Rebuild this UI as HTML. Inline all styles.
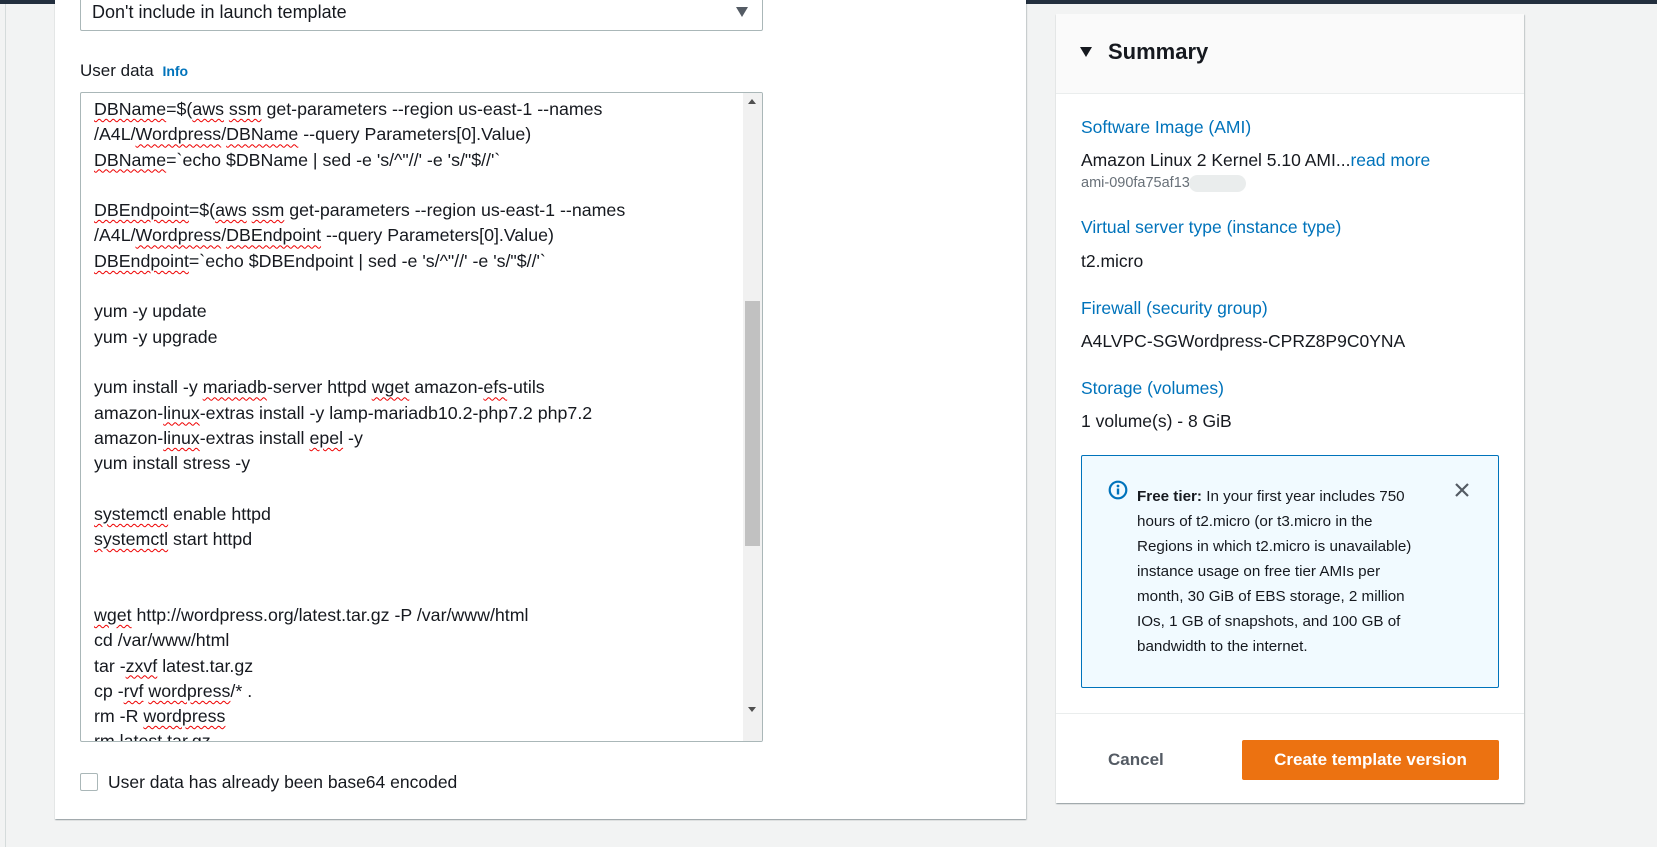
<!DOCTYPE html>
<html><head><meta charset="utf-8"><style>
*{box-sizing:border-box;margin:0;padding:0}
body{width:1657px;height:847px;background:#f2f3f3;font-family:"Liberation Sans",sans-serif;color:#16191f;position:relative;overflow:hidden}
.abs{position:absolute}
.topbar{left:0;top:0;width:1657px;height:4px;background:#232f3e}
.leftstrip{left:0;top:4px;width:6px;height:843px;background:#f2f3f3;border-right:1px solid #d5dbdb}
.card{left:55px;top:0;width:971px;height:819px;background:#fff;box-shadow:0 1px 1px rgba(0,28,36,.3),1px 1px 1px rgba(0,28,36,.15)}
.sel{left:80px;top:-2px;width:683px;height:33px;border:1px solid #aab7b8;border-radius:2px;background:#fff}
.cond{white-space:nowrap}
.ta{left:80px;top:92px;width:683px;height:650px;border:1px solid #aab7b8;border-radius:2px;overflow:hidden;background:#fff}
.lines{position:absolute;left:13px;top:4px;font-size:17.8px;line-height:25.3px;white-space:pre}
.w{text-decoration:underline wavy #e00;text-decoration-thickness:1px;text-underline-offset:3px}
.sb{position:absolute;right:0;top:0;width:19px;height:648px;background:#f1f1f1}
.thumb{position:absolute;left:2px;top:208px;width:15px;height:245px;background:#c1c1c1}
.side{left:1056px;top:14px;width:468px;height:789px;background:#fff;box-shadow:0 1px 1px rgba(0,28,36,.3),1px 1px 1px rgba(0,28,36,.15)}
.head{left:0;top:0;width:468px;height:80px;background:#fafafa;border-bottom:1px solid #eaeded}
.lbl{color:#0073bb;font-size:17.5px}
.val{font-size:17.5px;color:#16191f}
.info{left:25px;top:441px;width:418px;height:233px;background:#f1faff;border:1px solid #0073bb;border-radius:2px}
.ft{position:absolute;left:55px;top:28px;width:286px;font-size:15.2px;line-height:25px;color:#16191f}
.btn{left:186px;top:726px;width:257px;height:40px;background:#ec7211;border-radius:2px;color:#fff;font-weight:bold;font-size:17px;text-align:center;line-height:40px}
</style></head><body>
<div class="abs topbar"></div>
<div class="abs leftstrip"></div>
<div class="abs card"></div>
<div class="abs sel"><div class="abs cond" style="left:11px;top:3px;font-size:18px">Don't include in launch template</div>
<div class="abs" style="right:14px;top:8px;width:0;height:0;border-left:6px solid transparent;border-right:6px solid transparent;border-top:10px solid #545b64"></div></div>
<div class="abs cond" style="left:80px;top:61px;font-size:17px">User data <b style="color:#0073bb;font-size:14px;margin-left:4px">Info</b></div>
<div class="abs ta">
<div class="lines"><span class="w">DBName</span>=$(<span class="w">aws</span> <span class="w">ssm</span> get-parameters --region us-east-1 --names
/A4L/<span class="w">Wordpress</span>/<span class="w">DBName</span> --query Parameters[0].Value)
<span class="w">DBName</span>=`echo $DBName | sed -e 's/^"//' -e 's/"$//'`

<span class="w">DBEndpoint</span>=$(<span class="w">aws</span> <span class="w">ssm</span> get-parameters --region us-east-1 --names
/A4L/<span class="w">Wordpress</span>/<span class="w">DBEndpoint</span> --query Parameters[0].Value)
<span class="w">DBEndpoint</span>=`echo $DBEndpoint | sed -e 's/^"//' -e 's/"$//'`

yum -y update
yum -y upgrade

yum install -y <span class="w">mariadb</span>-server httpd <span class="w">wget</span> amazon-<span class="w">efs</span>-utils
amazon-<span class="w">linux</span>-extras install -y lamp-mariadb10.2-php7.2 php7.2
amazon-<span class="w">linux</span>-extras install <span class="w">epel</span> -y
yum install stress -y

<span class="w">systemctl</span> enable httpd
<span class="w">systemctl</span> start httpd


<span class="w">wget</span> http://wordpress.org/latest.tar.gz -P /var/www/html
cd /var/www/html
tar -<span class="w">zxvf</span> latest.tar.gz
cp -<span class="w">rvf</span> <span class="w">wordpress</span>/* .
rm -R <span class="w">wordpress</span>
rm latest.tar.gz</div>
<div class="sb"><div class="abs" style="left:5px;top:6px;border-left:4px solid transparent;border-right:4px solid transparent;border-bottom:5px solid #505050"></div><div class="thumb"></div><div class="abs" style="left:5px;top:614px;border-left:4px solid transparent;border-right:4px solid transparent;border-top:5px solid #505050"></div></div>
</div>
<div class="abs" style="left:80px;top:773px;width:18px;height:18px;border:1px solid #aab7b8;border-radius:2px;background:#fff"></div>
<div class="abs cond" style="left:108px;top:772px;font-size:17.5px">User data has already been base64 encoded</div>

<div class="abs side">
<div class="abs head"><div class="abs" style="left:24px;top:33px;border-left:6px solid transparent;border-right:6px solid transparent;border-top:10px solid #16191f"></div>
<div class="abs" style="left:52px;top:25px;font-size:22px;font-weight:bold">Summary</div></div>
<div class="abs lbl cond" style="left:25px;top:103px">Software Image (AMI)</div>
<div class="abs val cond" style="left:25px;top:136px">Amazon Linux 2 Kernel 5.10 AMI...<span style="color:#0073bb">read more</span></div>
<div class="abs cond" style="left:25px;top:161px;font-size:14.5px;color:#687078">ami-090fa75af13</div>
<div class="abs" style="left:133px;top:161px;width:57px;height:17px;border-radius:9px;background:#eaeded"></div>
<div class="abs lbl cond" style="left:25px;top:203px">Virtual server type (instance type)</div>
<div class="abs val cond" style="left:25px;top:237px">t2.micro</div>
<div class="abs lbl cond" style="left:25px;top:284px">Firewall (security group)</div>
<div class="abs val cond" style="left:25px;top:317px">A4LVPC-SGWordpress-CPRZ8P9C0YNA</div>
<div class="abs lbl cond" style="left:25px;top:364px">Storage (volumes)</div>
<div class="abs val cond" style="left:25px;top:397px">1 volume(s) - 8 GiB</div>
<div class="abs info">
<svg class="abs" style="left:26px;top:24px" width="20" height="20" viewBox="0 0 20 20"><circle cx="10" cy="10" r="8.3" fill="none" stroke="#0073bb" stroke-width="2.2"/><circle cx="10" cy="6" r="1.4" fill="#0073bb"/><rect x="8.8" y="8.5" width="2.4" height="6" fill="#0073bb"/></svg>
<div class="ft"><b>Free tier:</b> In your first year includes 750 hours of t2.micro (or t3.micro in the Regions in which t2.micro is unavailable) instance usage on free tier AMIs per month, 30 GiB of EBS storage, 2 million IOs, 1 GB of snapshots, and 100 GB of bandwidth to the internet.</div>
<svg class="abs" style="left:372px;top:26px" width="16" height="16" viewBox="0 0 16 16"><path d="M2 2L14 14M14 2L2 14" stroke="#545b64" stroke-width="2.2"/></svg>
</div>
<div class="abs" style="left:0;top:699px;width:468px;height:1px;background:#eaeded"></div>
<div class="abs cond" style="left:52px;top:736px;font-size:17px;font-weight:bold;color:#545b64">Cancel</div>
<div class="abs btn">Create template version</div>
</div>
</body></html>
